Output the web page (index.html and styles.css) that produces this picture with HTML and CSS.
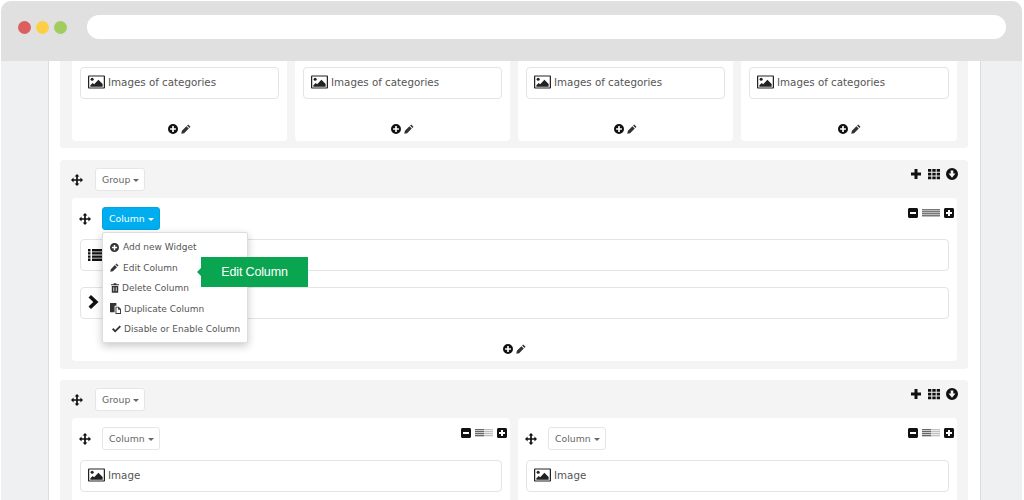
FILE: index.html
```html
<!DOCTYPE html>
<html lang="en">
<head>
  <meta charset="UTF-8">
  <title>Layout Builder</title>
  <link rel="stylesheet" href="styles.css">
</head>
<body>

  <svg class="icon-defs" width="0" height="0">
    <symbol id="i-move" viewBox="0 0 14 14"><path d="M7 0l2.800 3H8v3h3V4.200L14 7l-3 2.800V8H8v3h1.800L7 14l-2.800-3H6V8H3v1.800L0 7l3-2.800V6h3V3H4.200z"/></symbol>
    <symbol id="i-image" viewBox="0 0 18 14"><path fill-rule="evenodd" d="M1.200 0h15.600c.7 0 1.200.5 1.200 1.200v11.600c0 .7-.5 1.200-1.200 1.200H1.200C.5 14 0 13.500 0 12.800V1.200C0 .5.500 0 1.200 0zM1.300 1.300v11.400h15.400V1.300z"/><circle cx="4.400" cy="4" r="1.600"/><path d="M2.500 12v-1.500L5 8l1.500 1.300L11 4.500l4.500 4.500v3z"/></symbol>
    <symbol id="i-plus-circle" viewBox="0 0 12 12"><path fill-rule="evenodd" d="M6 0a6 6 0 1 1 0 12A6 6 0 0 1 6 0zM5 2.500V5H2.500v2H5v2.500h2V7h2.500V5H7V2.500z"/></symbol>
    <symbol id="i-down-circle" viewBox="0 0 12 12"><path fill-rule="evenodd" d="M6 0a6 6 0 1 1 0 12A6 6 0 0 1 6 0zM4.700 2.500V5.500H2.500L6 9.800l3.500-4.300H7.300V2.500z"/></symbol>
    <symbol id="i-pencil" viewBox="0 0 12 12"><path d="M8.600.6l2.800 2.800-1.300 1.300-2.800-2.800zM6.500 2.700l2.800 2.800-5.500 5.500-3.500.8.800-3.600z"/></symbol>
    <symbol id="i-plus" viewBox="0 0 12 12"><path d="M4.500 1h3v3.500H11v3H7.500V11h-3V7.500H1v-3h3.500z"/></symbol>
    <symbol id="i-grid" viewBox="0 0 12 12"><path d="M0 1h3.300v2.800H0zM4.300 1h3.400v2.800H4.300zM8.700 1H12v2.800H8.700zM0 4.700h3.300v2.800H0zM4.300 4.700h3.400v2.800H4.300zM8.700 4.700H12v2.800H8.700zM0 8.400h3.300v2.800H0zM4.300 8.400h3.400v2.800H4.300zM8.700 8.400H12v2.800H8.700z"/></symbol>
    <symbol id="i-minus-square" viewBox="0 0 10 10"><path fill-rule="evenodd" d="M1.500 0h7C9.300 0 10 .7 10 1.500v7c0 .8-.7 1.500-1.500 1.500h-7C.7 10 0 9.300 0 8.500v-7C0 .7.700 0 1.500 0zM2 4v2h6V4z"/></symbol>
    <symbol id="i-plus-square" viewBox="0 0 10 10"><path fill-rule="evenodd" d="M1.500 0h7C9.300 0 10 .7 10 1.500v7c0 .8-.7 1.500-1.500 1.500h-7C.7 10 0 9.300 0 8.500v-7C0 .7.700 0 1.500 0zM4 2v2H2v2h2v2h2V6h2V4H6V2z"/></symbol>
    <symbol id="i-trash" viewBox="0 0 10 12"><path fill-rule="evenodd" d="M3.500 0h3l.5 1.300h3v1.400H0V1.300h3zM1 3.500h8V12H1zM3 5v5.200h1V5zM6 5v5.200h1V5z"/></symbol>
    <symbol id="i-copy" viewBox="0 0 12 12"><path d="M0 0h7v3H5v7H0z"/><path fill-rule="evenodd" d="M6 4h3.500L12 6.500V12H6zM7 5v6h4V7.300H8.800V5z"/></symbol>
    <symbol id="i-check" viewBox="0 0 12 10"><path d="M4.300 9.800L0 5.500l1.800-1.800 2.500 2.500L10.200.3 12 2.100z"/></symbol>
    <symbol id="i-list" viewBox="0 0 16 12"><path d="M0 0h2.500v2.400H0zM4 0h12v2.400H4zM0 3.200h2.500v2.400H0zM4 3.200h12v2.400H4zM0 6.400h2.500v2.400H0zM4 6.400h12v2.400H4zM0 9.600h2.500V12H0zM4 9.600h12V12H4z"/></symbol>
    <symbol id="i-chevron" viewBox="0 0 10 14"><path d="M2.500 0L10 7l-7.500 7L0 11.600 4.800 7 0 2.400z"/></symbol>
  </svg>

  <div class="frame">

    <div class="browser-bar">
      <span class="dot dot-red"></span>
      <span class="dot dot-yellow"></span>
      <span class="dot dot-green"></span>
      <div class="address"></div>
    </div>

    <div class="page">

      <section class="group group-cut">
        <div class="columns">
          <div class="column column-cut">
            <div class="widget"><svg class="ic-image"><use href="#i-image"/></svg>Images of categories</div>
            <div class="column-foot"><svg class="ic-foot"><use href="#i-plus-circle"/></svg><svg class="ic-foot ic-pencil"><use href="#i-pencil"/></svg></div>
          </div>
          <div class="column column-cut">
            <div class="widget"><svg class="ic-image"><use href="#i-image"/></svg>Images of categories</div>
            <div class="column-foot"><svg class="ic-foot"><use href="#i-plus-circle"/></svg><svg class="ic-foot ic-pencil"><use href="#i-pencil"/></svg></div>
          </div>
          <div class="column column-cut">
            <div class="widget"><svg class="ic-image"><use href="#i-image"/></svg>Images of categories</div>
            <div class="column-foot"><svg class="ic-foot"><use href="#i-plus-circle"/></svg><svg class="ic-foot ic-pencil"><use href="#i-pencil"/></svg></div>
          </div>
          <div class="column column-cut">
            <div class="widget"><svg class="ic-image"><use href="#i-image"/></svg>Images of categories</div>
            <div class="column-foot"><svg class="ic-foot"><use href="#i-plus-circle"/></svg><svg class="ic-foot ic-pencil"><use href="#i-pencil"/></svg></div>
          </div>
        </div>
      </section>

      <section class="group group-one">
        <div class="group-head">
          <svg class="ic-move"><use href="#i-move"/></svg>
          <button class="btn">Group <span class="caret"></span></button>
          <div class="tools">
            <svg class="ic"><use href="#i-plus"/></svg>
            <svg class="ic"><use href="#i-grid"/></svg>
            <svg class="ic"><use href="#i-down-circle"/></svg>
          </div>
        </div>
        <div class="columns">
          <div class="column">
            <div class="column-head">
              <svg class="ic-move"><use href="#i-move"/></svg>
              <button class="btn btn-active">Column <span class="caret"></span></button>
              <div class="sizer">
                <svg class="ic-small"><use href="#i-minus-square"/></svg>
                <span class="bars"></span>
                <svg class="ic-small"><use href="#i-plus-square"/></svg>
              </div>
            </div>
            <div class="widget"><svg class="ic-list"><use href="#i-list"/></svg></div>
            <div class="widget widget-next"><svg class="ic-chevron"><use href="#i-chevron"/></svg></div>
            <div class="column-foot"><svg class="ic-foot"><use href="#i-plus-circle"/></svg><svg class="ic-foot ic-pencil"><use href="#i-pencil"/></svg></div>

            <ul class="menu">
              <li><svg class="ic-menu"><use href="#i-plus-circle"/></svg>Add new Widget</li>
              <li><svg class="ic-menu"><use href="#i-pencil"/></svg>Edit Column</li>
              <li><svg class="ic-trash"><use href="#i-trash"/></svg>Delete Column</li>
              <li><svg class="ic-copy"><use href="#i-copy"/></svg>Duplicate Column</li>
              <li><svg class="ic-check"><use href="#i-check"/></svg>Disable or Enable Column</li>
            </ul>
            <div class="callout">Edit Column</div>
          </div>
        </div>
      </section>

      <section class="group group-two">
        <div class="group-head">
          <svg class="ic-move"><use href="#i-move"/></svg>
          <button class="btn">Group <span class="caret"></span></button>
          <div class="tools">
            <svg class="ic"><use href="#i-plus"/></svg>
            <svg class="ic"><use href="#i-grid"/></svg>
            <svg class="ic"><use href="#i-down-circle"/></svg>
          </div>
        </div>
        <div class="columns">
          <div class="column">
            <div class="column-head">
              <svg class="ic-move"><use href="#i-move"/></svg>
              <button class="btn">Column <span class="caret"></span></button>
              <div class="sizer">
                <svg class="ic-small"><use href="#i-minus-square"/></svg>
                <span class="bars bars-half"></span>
                <svg class="ic-small"><use href="#i-plus-square"/></svg>
              </div>
            </div>
            <div class="widget"><svg class="ic-image"><use href="#i-image"/></svg>Image</div>
          </div>
          <div class="column">
            <div class="column-head">
              <svg class="ic-move"><use href="#i-move"/></svg>
              <button class="btn">Column <span class="caret"></span></button>
              <div class="sizer">
                <svg class="ic-small"><use href="#i-minus-square"/></svg>
                <span class="bars bars-half"></span>
                <svg class="ic-small"><use href="#i-plus-square"/></svg>
              </div>
            </div>
            <div class="widget"><svg class="ic-image"><use href="#i-image"/></svg>Image</div>
          </div>
        </div>
      </section>

    </div>
  </div>

</body>
</html>
```

FILE: styles.css
```css
* {
  box-sizing: border-box;
}
html, body {
  margin: 0;
  height: 500px;
  overflow: hidden;
}
body {
  font-family: "DejaVu Sans", Verdana, sans-serif;
  font-size: 10px;
  color: #555;
  background-color: white;
}
.icon-defs {
  position: absolute;
}
svg {
  display: block;
  fill: #111;
  flex: none;
}

/* browser chrome */
.frame {
  height: 499px;
  margin: 1px 2px 0 1px;
  background-color: #eff0f2;
  border-radius: 10px 10px 0 0;
}
.browser-bar {
  height: 60px;
  display: flex;
  align-items: flex-start;
  padding: 14px 16px 0 17px;
  background: #e0e0e0;
  border-radius: 10px 10px 0 0;
}
.dot {
  width: 13px;
  height: 13px;
  border-radius: 50%;
  margin: 6px 5px 0 0;
}
.dot-red { background: #db5f5f; }
.dot-yellow { background: #fdcf46; }
.dot-green { background: #a2cc5e; margin-right: 0; }
.address {
  flex: 1;
  height: 24px;
  margin-left: 20px;
  background: white;
  border-radius: 12px;
}

/* page area */
.page {
  width: 933px;
  height: 439px;
  margin-left: 47px;
  padding: 0 12px;
  background: white;
  border-left: 1px solid #dcdcdc;
  border-right: 1px solid #dcdcdc;
  overflow: hidden;
}
.group {
  width: 908px;
  margin-left: -1px;
  padding: 8px 11px 8px 12px;
  background: #f4f4f4;
  border-radius: 4px;
}
.group-cut {
  height: 87px;
  padding-top: 0;
  border-radius: 0 0 4px 4px;
}
.group-one {
  height: 209px;
  margin-top: 12px;
}
.group-two {
  margin-top: 11px;
  height: 140px;
}
.group-head {
  height: 23px;
  display: flex;
  align-items: center;
  margin-bottom: 7px;
}
.group-head .ic-move {
  margin: 0 12px 0 -1px;
}
.tools {
  display: flex;
  gap: 6px;
  margin-left: auto;
  margin-top: -11px;
  margin-right: -1px;
}
.ic {
  width: 12px;
  height: 12px;
}
.ic-foot {
  width: 10px;
  height: 10px;
}
.ic-pencil {
  margin-left: 3px;
  fill: #333;
}
.ic-move {
  width: 12px;
  height: 12px;
}
.btn {
  height: 23px;
  padding: 0 5px 0 6px;
  background: white;
  border: 1px solid #e6e6e6;
  border-radius: 3px;
  font: inherit;
  font-size: 9.300px;
  color: #666;
}
.btn-active {
  background: #00aeef;
  border-color: #00a4e0;
  color: white;
}
.caret {
  display: inline-block;
  width: 0;
  height: 0;
  vertical-align: middle;
  border-top: 3px solid currentColor;
  border-left: 3px solid transparent;
  border-right: 3px solid transparent;
}

/* columns */
.columns {
  display: flex;
  gap: 8px;
}
.column {
  position: relative;
  flex: 1;
  min-width: 0;
  padding: 9px 8px 0;
  background: white;
  border-radius: 4px;
}
.group-one .column {
  height: 163px;
}
.group-two .column {
  height: 90px;
}
.group-two .column:first-child {
  flex: none;
  width: 438px;
}
.column-cut {
  flex: none;
  width: 215px;
  height: 80px;
  padding-top: 6px;
  border-radius: 0 0 4px 4px;
}
.column-cut:last-child {
  flex: 1;
}
.column-head {
  display: flex;
  align-items: center;
  height: 23px;
  margin-bottom: 9px;
}
.group-two .column-head {
  margin-bottom: 10px;
}
.column-head .ic-move {
  margin: 0 11px 0 -1px;
}
.sizer {
  display: flex;
  align-items: center;
  gap: 4px;
  margin-left: auto;
  margin-top: -12px;
  margin-right: -5px;
}
.ic-small {
  width: 10px;
  height: 10px;
}
.bars {
  display: block;
  width: 18px;
  height: 8px;
  background: repeating-linear-gradient(#777 0 1px, #bbb 1px 2px);
}
.bars-half {
  background: linear-gradient(90deg, transparent 50%, rgba(255, 255, 255, 0.6) 50%), repeating-linear-gradient(#666 0 1px, #ccc 1px 2px);
}
.widget {
  display: flex;
  align-items: center;
  height: 32px;
  padding: 0 7px 2px;
  background: white;
  border: 1px solid #e4e4e4;
  border-radius: 4px;
  font-size: 10.300px;
  color: #555;
}
.widget-next {
  margin-top: 16px;
}
.ic-image {
  width: 17px;
  height: 14px;
  margin-right: 3px;
  fill: #222;
}
.ic-list {
  width: 16px;
  height: 12px;
  margin-top: 2px;
}
.ic-chevron {
  width: 11px;
  height: 14px;
}
.column-foot {
  display: flex;
  justify-content: center;
  margin-top: 25px;
}

/* dropdown */
.menu {
  position: absolute;
  left: 30px;
  top: 34px;
  width: 146px;
  height: 111px;
  margin: 0;
  padding: 4px 7px;
  list-style: none;
  background: white;
  border: 1px solid #ddd;
  border-radius: 2px;
  box-shadow: 0 3px 8px rgba(0, 0, 0, 0.22);
  z-index: 2;
}
.menu li {
  display: flex;
  align-items: center;
  height: 20.500px;
  font-size: 9px;
  white-space: nowrap;
  color: #555;
}
.ic-menu {
  width: 9px;
  height: 9px;
  margin-right: 4px;
  fill: #333;
}
.ic-trash {
  width: 8px;
  height: 10px;
  margin: 0 3px 0 1px;
  fill: #333;
}
.ic-copy {
  width: 11px;
  height: 11px;
  margin-right: 3px;
  fill: #333;
}
.ic-check {
  width: 9px;
  height: 8px;
  margin: 0 3px 0 2px;
  fill: #333;
}
.callout {
  position: absolute;
  left: 129px;
  top: 59px;
  width: 107px;
  height: 30px;
  line-height: 30px;
  text-align: center;
  font-family: "Liberation Sans", Arial, sans-serif;
  font-size: 12.500px;
  letter-spacing: -0.15px;
  color: white;
  background: #0aa550;
  z-index: 3;
}
.callout::before {
  content: "";
  position: absolute;
  left: -4px;
  top: 11px;
  border-top: 4px solid transparent;
  border-bottom: 4px solid transparent;
  border-right: 4px solid #0aa550;
}
```
